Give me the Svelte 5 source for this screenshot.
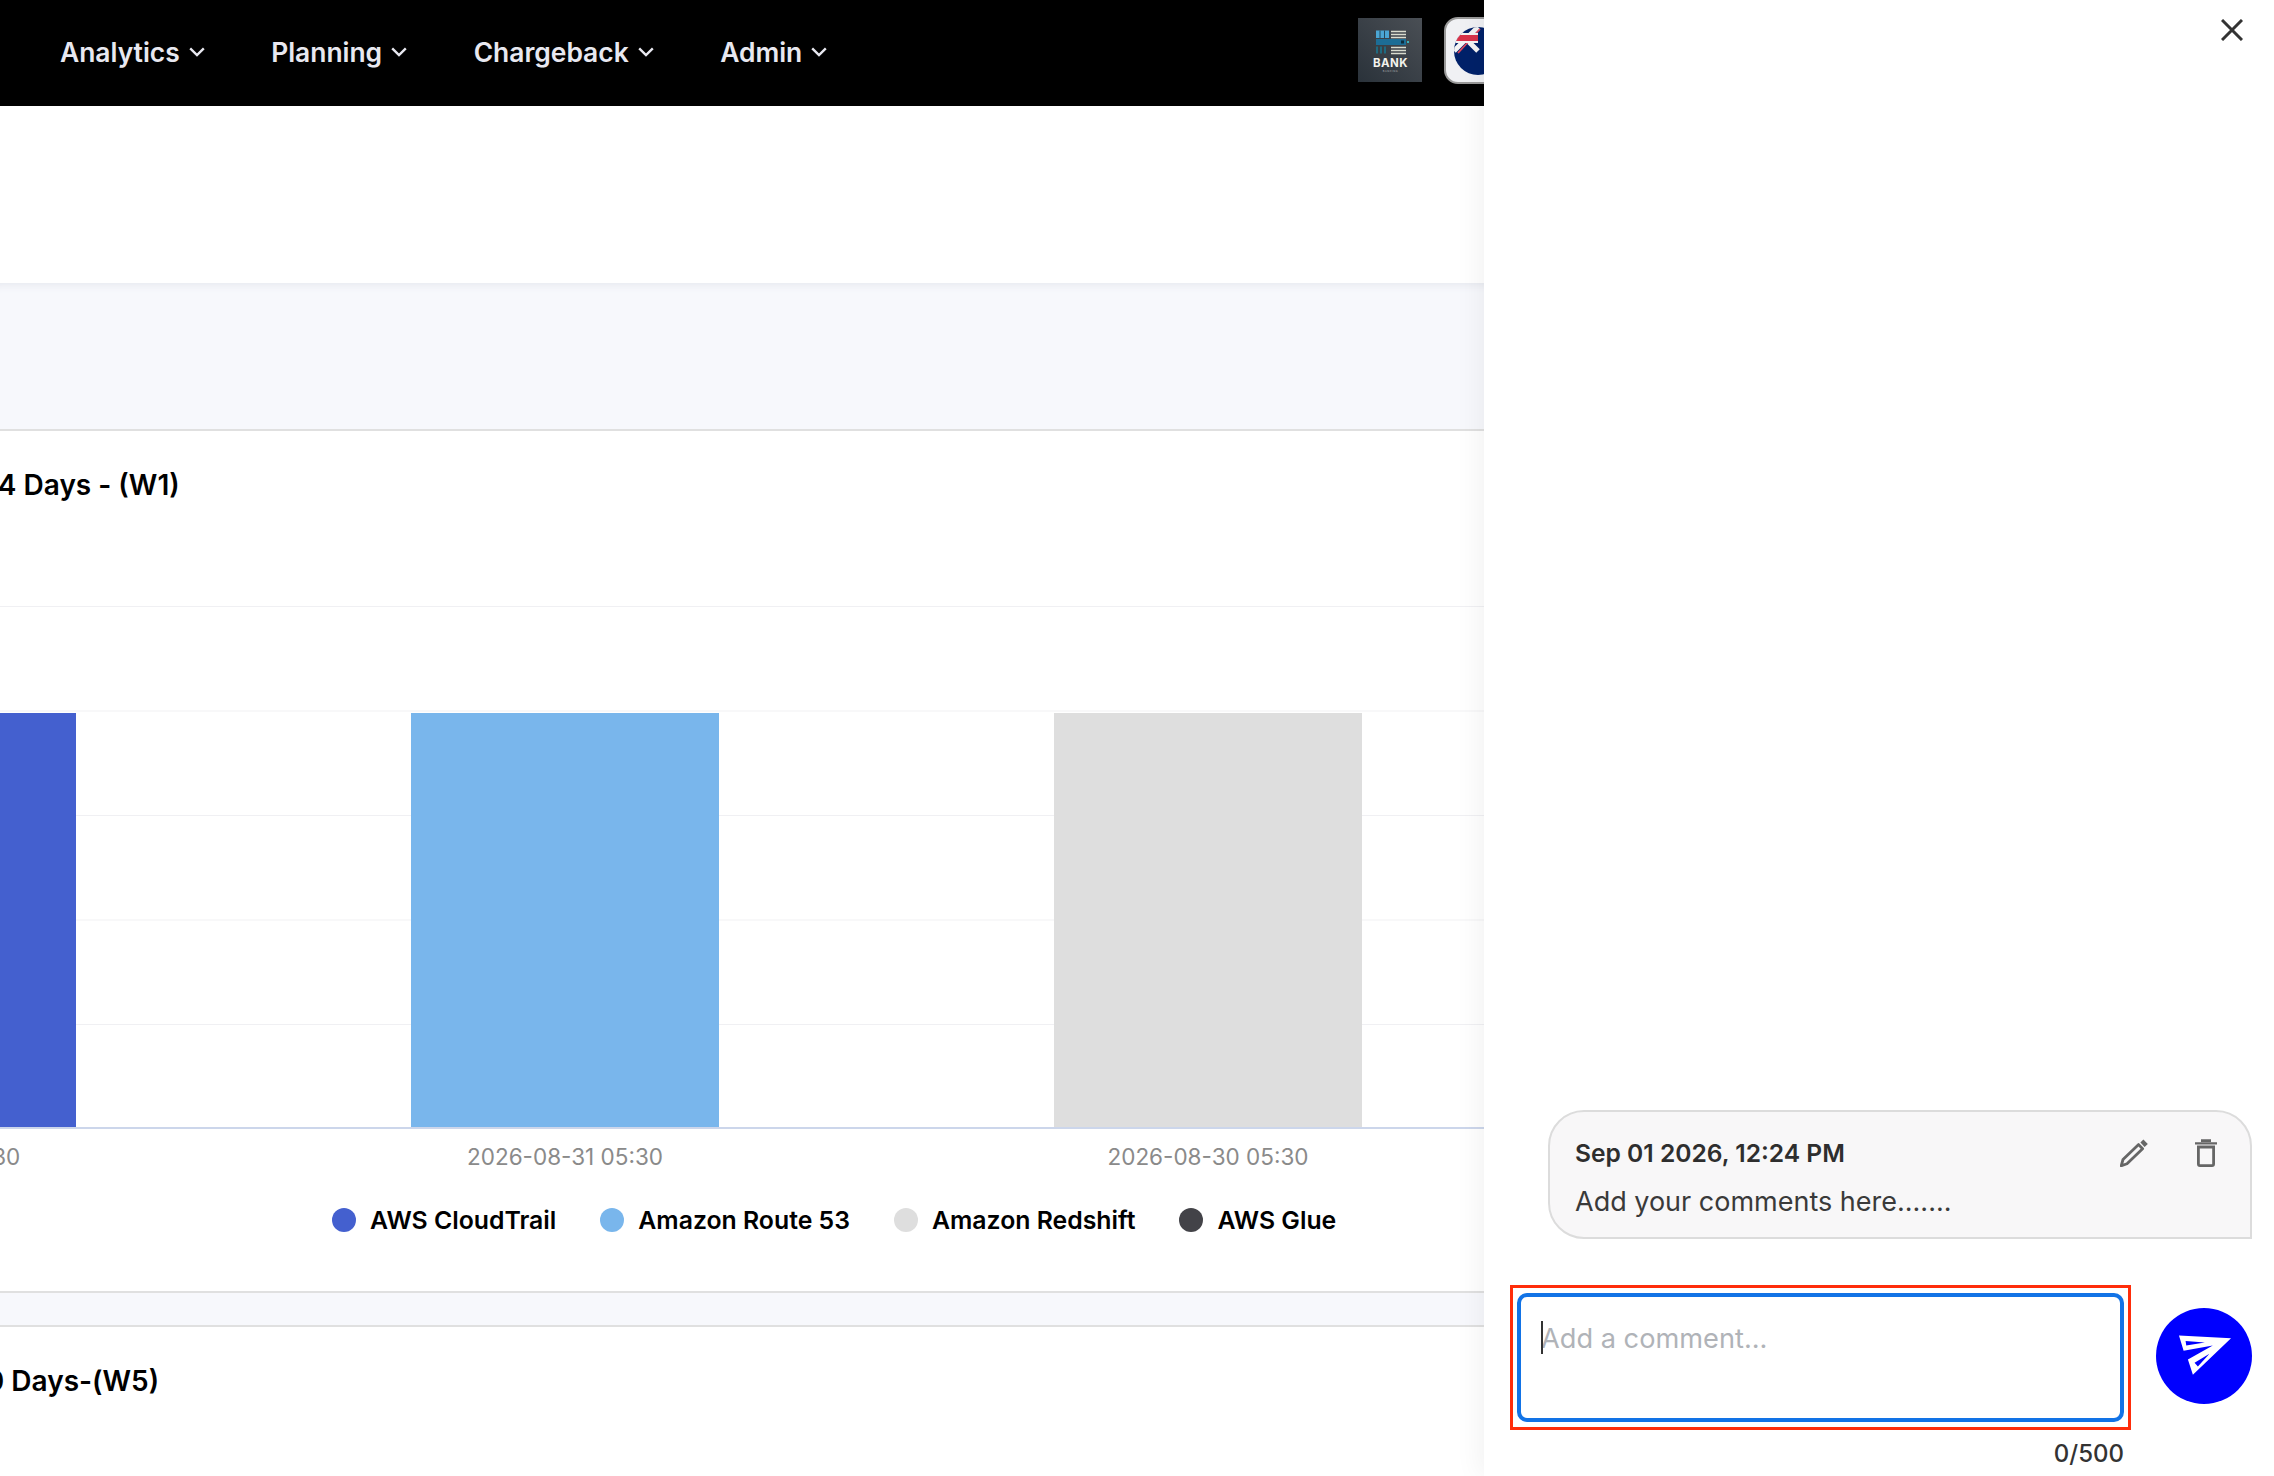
<script lang="ts">
  const navItems = ['Analytics', 'Planning', 'Chargeback', 'Admin'];

  const series = [
    { name: 'AWS CloudTrail', color: '#4460cf', date: '2026-09-01 05:30' },
    { name: 'Amazon Route 53', color: '#79b6ec', date: '2026-08-31 05:30' },
    { name: 'Amazon Redshift', color: '#dedede', date: '2026-08-30 05:30' },
    { name: 'AWS Glue', color: '#434348', date: '' }
  ];

  let comment = $state('');
</script>

<div class="page">
  <header class="topbar">
    <nav class="nav">
      {#each navItems as item}
        <div class="nav-item">
          <span>{item}</span>
          <svg class="chevron" viewBox="0 0 16 10" width="16" height="10">
            <path d="M1.2 1.4 L8 8 L14.8 1.4" fill="none" stroke="#e8e8f0" stroke-width="2.4" />
          </svg>
        </div>
      {/each}
    </nav>
    <div class="brand">
      <svg class="bank-logo" viewBox="0 0 64 64" width="64" height="64">
        <defs>
          <linearGradient id="bankBg" x1="0" y1="1" x2="1" y2="0">
            <stop offset="0" stop-color="#2a323a" />
            <stop offset="1" stop-color="#4a4f55" />
          </linearGradient>
        </defs>
        <rect width="64" height="64" fill="url(#bankBg)" />
        <rect x="18" y="12.5" width="13" height="7.5" fill="#4ba6d4" />
        <path d="M22 12.5v7.5M26.5 12.5v7.5" stroke="#24485c" stroke-width="1" />
        <path d="M33 13.5h15M33 16.5h15M33 19.5h15" stroke="#d9dccf" stroke-width="1.6" />
        <rect x="18" y="21" width="30" height="6" fill="#1c6d96" />
        <rect x="43" y="22.5" width="3" height="3" fill="#0d2c3c" />
        <rect x="49" y="23" width="2" height="2" fill="#3bb3bb" />
        <path d="M19 28.5v7M23 28.5v7M27 28.5v7" stroke="#1f6a80" stroke-width="2" />
        <path d="M33 29.5h15M33 32.5h15M33 35.5h15" stroke="#d9dccf" stroke-width="1.6" />
        <text x="32.5" y="48.5" text-anchor="middle" class="bank-name">BANK</text>
        <text x="32.5" y="53.5" text-anchor="middle" class="bank-sub">BANKING</text>
      </svg>
      <div class="flag-box">
        <svg viewBox="0 0 48 48" width="48" height="48">
          <defs>
            <clipPath id="flagCircle"><circle cx="24" cy="24" r="24" /></clipPath>
          </defs>
          <g clip-path="url(#flagCircle)">
            <rect width="48" height="48" fill="#012169" />
            <path d="M0 24 L24 0 M0 0 L24 24" stroke="#f4f4f4" stroke-width="5" />
            <path d="M4 26 L26 2" stroke="#e0475c" stroke-width="1.8" />
            <rect x="0" y="6" width="24" height="10" fill="#f4f4f4" />
            <rect x="0" y="8" width="24" height="6" fill="#d8324a" />
          </g>
        </svg>
      </div>
    </div>
  </header>

  <main class="content">
    <div class="band-tall"></div>

    <h2 class="section-title first">14 Days - (W1)</h2>

    <div class="plot">
      <div class="bars">
        {#each series.slice(0, 3) as s}
          <div class="bar" style="background: {s.color}"></div>
        {/each}
      </div>
    </div>
    <div class="x-axis">
      {#each series.slice(0, 3) as s}
        <div class="x-label">{s.date}</div>
      {/each}
    </div>

    <div class="legend">
      {#each series as s}
        <div class="legend-item">
          <span class="dot" style="background: {s.color}"></span>
          <span>{s.name}</span>
        </div>
      {/each}
    </div>

    <div class="band-thin"></div>

    <h2 class="section-title second">30 Days-(W5)</h2>
  </main>

  <aside class="drawer">
    <button class="close" aria-label="Close">
      <svg viewBox="0 0 22 22" width="22" height="22">
        <path d="M1 1 L21 21 M21 1 L1 21" stroke="#333" stroke-width="3" fill="none" />
      </svg>
    </button>

    <div class="comment-card">
      <div class="comment-head">
        <span class="comment-date">Sep 01 2026, 12:24 PM</span>
        <div class="comment-actions">
          <svg viewBox="0 0 28 28" width="28" height="28">
            <path d="M1.2 26.8 L3 20.5 L18.6 5.6 L22.6 9.8 L7 24.8 Z" fill="none" stroke="#666" stroke-width="2.8" stroke-linejoin="round" />
            <path d="M20.4 3.6 L23.4 .6 L27.8 5 L24.6 8 Z" fill="#666" />
          </svg>
          <svg viewBox="0 0 22 28" width="22" height="28">
            <path d="M0 3.2 H22 V5.6 H0 Z M6 .2 H16 V3 H6 Z" fill="#666" />
            <path d="M3.4 8 V25 Q3.4 26.6 5 26.6 H17 Q18.6 26.6 18.6 25 V8 Z" fill="none" stroke="#666" stroke-width="2.8" />
          </svg>
        </div>
      </div>
      <p class="comment-text">Add your comments here.......</p>
    </div>

    <div class="composer">
      <div class="input-highlight">
        <div class="input-box">
          <textarea bind:value={comment} placeholder="Add a comment..." maxlength="500"></textarea>
          <span class="caret"></span>
        </div>
      </div>
      <button class="send" aria-label="Send">
        <svg viewBox="130 140 190 140" width="63" height="47">
          <path fill="#fff" fill-rule="evenodd" d="M148 150 L305 158 L190 268 L175 222 L250 180 L162 196 Z M168 166 L170 180 L226 171 Z M195 232 L205 243 L240 205 Z" />
        </svg>
      </button>
    </div>
    <div class="counter">{comment.length}/500</div>
  </aside>
</div>

<style>
  :global(body) {
    margin: 0;
    background: #fff;
    font-family: Inter, "Noto Sans", sans-serif;
  }

  .page {
    position: relative;
    height: 1476px;
    overflow: hidden;
  }

  .topbar {
    height: 106px;
    background: #000;
    display: flex;
    align-items: center;
    justify-content: space-between;
    padding-left: 60px;
  }

  .nav {
    display: flex;
    gap: 66.5px;
    margin-top: -3px;
    color: #e8e8f0;
    font-size: 26.4px;
    font-weight: 600;
  }

  .nav-item {
    display: flex;
    align-items: center;
    gap: 9px;
  }

  .brand {
    display: flex;
    align-items: center;
    gap: 22px;
    margin: -6px 852px 0 0;
    width: 64px;
    flex-shrink: 0;
  }

  .bank-logo {
    flex-shrink: 0;
  }

  .bank-name {
    font-size: 11.5px;
    font-weight: 700;
    fill: #f2f2ec;
    letter-spacing: 0.4px;
  }

  .bank-sub {
    font-size: 2.6px;
    fill: #a8adb0;
    letter-spacing: 0.5px;
  }

  .flag-box {
    flex-shrink: 0;
    box-sizing: border-box;
    width: 90px;
    height: 67px;
    border: 2px solid #999;
    border-radius: 14px;
    background: #f0f1f4;
    padding: 8px;
    display: flex;
  }

  .band-tall {
    margin-top: 177px;
    height: 148px;
    box-sizing: border-box;
    background: #f7f8fc;
    border-bottom: 2px solid #e0e0e0;
    box-shadow: inset 0 10px 8px -8px #e6e8ee;
  }

  .section-title {
    margin: 0;
    font-size: 28px;
    font-weight: 600;
    line-height: 36px;
    color: #000;
    white-space: nowrap;
  }

  .section-title.first {
    padding-top: 36px;
    height: 139px;
    margin-left: -14px;
  }

  .section-title.second {
    padding-top: 36px;
    margin-left: -32px;
  }

  .plot {
    height: 521px;
    border-bottom: 2px solid #ccd6eb;
    background-image: linear-gradient(#f0f0f3 1px, transparent 1px);
    background-size: 100% 104.5px;
    display: flex;
    align-items: flex-end;
  }

  .bars,
  .x-axis {
    display: flex;
    gap: 335px;
    margin-left: -232px;
  }

  .bar {
    width: 308px;
    height: 414px;
  }

  .x-axis {
    padding-top: 14px;
  }

  .x-label {
    width: 308px;
    text-align: center;
    font-size: 22.5px;
    line-height: 28px;
    color: #8a8a8a;
  }

  .legend {
    display: flex;
    gap: 44px;
    padding: 34px 0 56px 332px;
    font-size: 24.8px;
    line-height: 30px;
    font-weight: 600;
    color: #000;
  }

  .legend-item {
    display: flex;
    align-items: center;
    gap: 14px;
  }

  .dot {
    width: 24px;
    height: 24px;
    border-radius: 50%;
  }

  .band-thin {
    height: 36px;
    box-sizing: border-box;
    background: #f7f8fc;
    border-top: 2px solid #e0e0e0;
    border-bottom: 2px solid #e0e0e0;
  }

  /* drawer sits over the page */
  .drawer {
    position: absolute;
    top: 0;
    right: 0;
    bottom: 0;
    width: 790px;
    box-sizing: border-box;
    background: #fff;
    box-shadow: -6px 0 24px rgba(0, 0, 0, 0.05);
    padding: 0 22px 7px 26px;
    display: flex;
    flex-direction: column;
    justify-content: flex-end;
  }

  .close {
    position: absolute;
    top: 19px;
    right: 31px;
    padding: 0;
    border: 0;
    background: none;
    display: flex;
  }

  .comment-card {
    box-sizing: border-box;
    height: 129px;
    margin-left: 38px;
    padding: 26px 33px 0 25px;
    background: #f8f7f8;
    border: 2px solid #dcdcdc;
    border-radius: 36px 36px 0 36px;
  }

  .comment-head {
    display: flex;
    align-items: center;
    justify-content: space-between;
    height: 30px;
  }

  .comment-date {
    font-size: 24.6px;
    font-weight: 600;
    color: #2e2e2e;
  }

  .comment-actions {
    display: flex;
    align-items: center;
    gap: 47px;
  }

  .comment-text {
    margin: 18px 0 0;
    font-size: 27px;
    line-height: 32px;
    color: #3a3a3a;
  }

  .composer {
    margin-top: 46px;
    display: flex;
    align-items: center;
    justify-content: space-between;
  }

  .input-highlight {
    box-sizing: border-box;
    width: 621px;
    height: 145px;
    border: 3px solid #ff2d0a;
    padding: 5px 4px;
  }

  .input-box {
    position: relative;
    box-sizing: border-box;
    height: 100%;
    border: 4px solid #1273e6;
    border-radius: 10px;
    display: flex;
  }

  textarea {
    flex: 1;
    border: 0;
    outline: 0;
    resize: none;
    background: none;
    padding: 25px 20px 0;
    font-family: inherit;
    font-size: 27.2px;
    line-height: 34px;
    color: #333;
  }

  textarea::placeholder {
    color: #b0b3b8;
  }

  .caret {
    position: absolute;
    left: 20px;
    top: 24px;
    width: 1.5px;
    height: 33px;
    background: #333;
  }

  .send {
    width: 96px;
    height: 96px;
    padding: 0;
    margin-bottom: 3px;
    border: 0;
    border-radius: 50%;
    background: #00f;
    display: flex;
    align-items: center;
    justify-content: center;
  }

  .counter {
    margin-top: 9.5px;
    width: 614px;
    text-align: right;
    font-size: 24px;
    line-height: 30px;
    font-weight: 500;
    color: #333;
  }
</style>
